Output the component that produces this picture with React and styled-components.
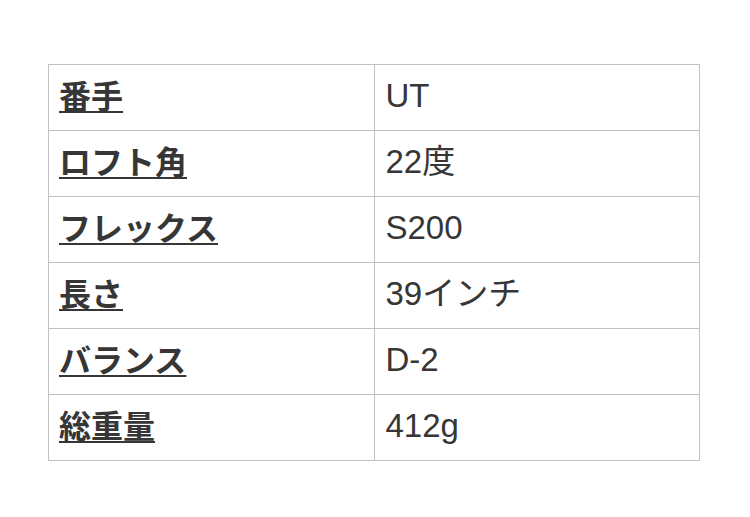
import React from 'react';
import styled, { createGlobalStyle } from 'styled-components';

const GlobalStyle = createGlobalStyle`
  body {
    margin: 0;
    background: #ffffff;
    font-family: "Liberation Sans", "Noto Sans CJK JP", sans-serif;
  }
`;

const specs = [
  { label: '番手', value: 'UT' },
  { label: 'ロフト角', value: '22度' },
  { label: 'フレックス', value: 'S200' },
  { label: '長さ', value: '39インチ' },
  { label: 'バランス', value: 'D-2' },
  { label: '総重量', value: '412g' },
];

const App = () => {
  return (
    <Page>
      <GlobalStyle />
      <SpecTable>
        <tbody>
          {specs.map((row) => (
            <tr key={row.label}>
              <Label>
                <u>{row.label}</u>
              </Label>
              <Value>{row.value}</Value>
            </tr>
          ))}
        </tbody>
      </SpecTable>
    </Page>
  );
};

const Page = styled.div`
  padding: 64px 0 0 48px;
`;

const SpecTable = styled.table`
  width: 652px;
  border-collapse: collapse;
  table-layout: fixed;
  color: #363636;
`;

const Cell = styled.td`
  box-sizing: border-box;
  height: 66px;
  padding: 0 10px 4px;
  border: 1px solid #c0c0c0;
  vertical-align: middle;
  line-height: 1.2;
`;

const Label = styled(Cell)`
  font-family: "Noto Sans CJK JP", sans-serif;
  font-size: 32px;
  font-weight: bold;
  padding-bottom: 6px;
  u {
    text-decoration-thickness: 2px;
    text-underline-offset: 3px;
  }
`;

const Value = styled(Cell)`
  padding-left: 11px;
  font-size: 33px;
`;

export default App;
